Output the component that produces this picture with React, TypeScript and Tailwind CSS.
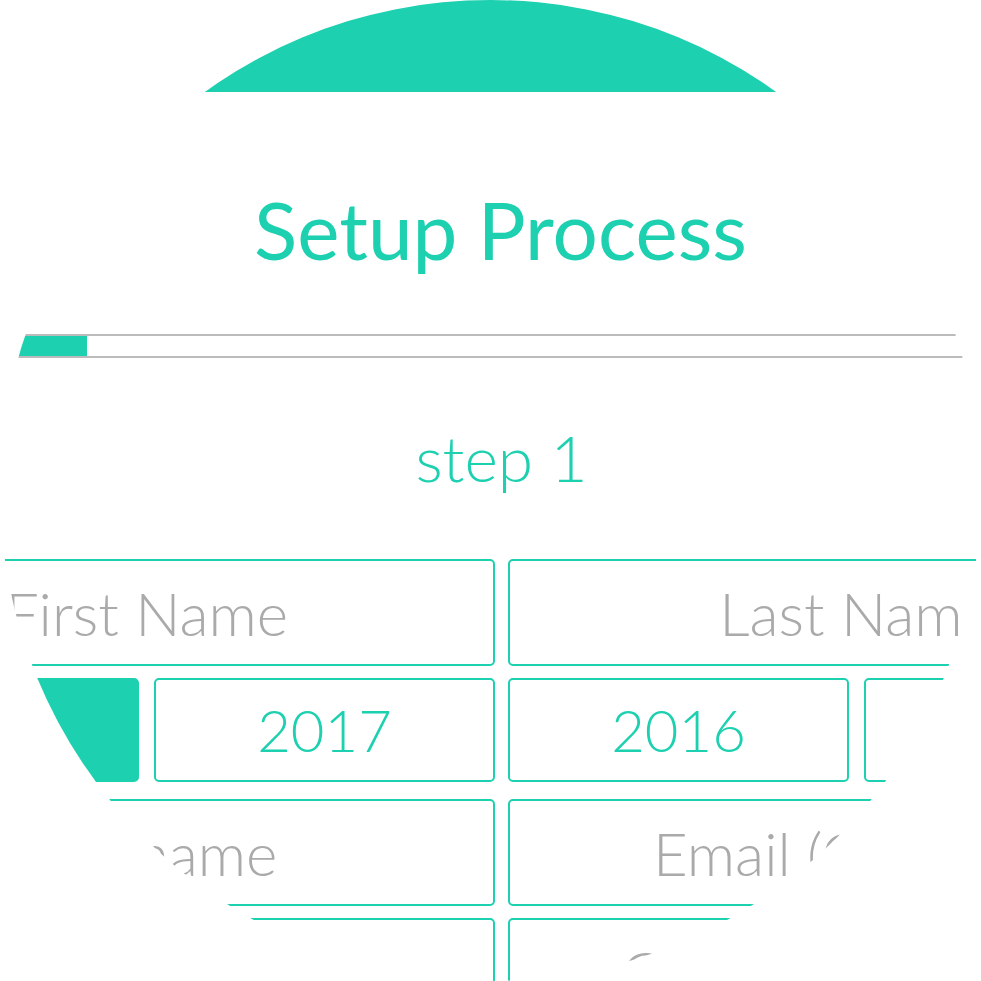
import React from "react";

const Field = ({ label, filled, className = "" }: { label?: string; filled?: boolean; className?: string }) => (
  <div
    className={`border-2 border-[#1dd0b0] rounded-[5px] flex items-center justify-center whitespace-nowrap overflow-hidden ${
      filled ? "bg-[#1dd0b0]" : ""
    } ${className}`}
  >
    {label}
  </div>
);

const App = () => {
  return (
    <div className="w-[981px] h-[981px] bg-white font-['Lato',sans-serif]">
      <div className="w-[981px] h-[981px] rounded-full overflow-hidden flex flex-col bg-white">
        <div className="h-[92px] shrink-0 bg-[#1dd0b0]"></div>

        <h1 className="mt-[97px] pl-[20px] text-center text-[80px] leading-none font-normal text-[#1dd0b0]">
          Setup Process
        </h1>

        <div className="mt-[65px] h-[24px] shrink-0 border-y-2 border-[#bbbbbb]">
          <div className="h-full w-[87px] bg-[#1dd0b0]"></div>
        </div>

        <p className="mt-[68px] pl-[22px] text-center text-[64px] leading-none font-light text-[#1dd0b0]">
          step 1
        </p>

        <div className="mt-[69px] w-[1407px] ml-[-202px] shrink-0 flex flex-col text-[60px] leading-none font-light text-[#aaaaaa]">
          <div className="grid grid-cols-2 gap-[13px]">
            <Field label="First Name" className="h-[107px]" />
            <Field label="Last Name" className="h-[107px]" />
          </div>

          <div className="mt-[12px] grid grid-cols-2 gap-[13px] text-[#1dd0b0] text-[58px]">
            <div className="grid grid-cols-2 gap-[15px]">
              <Field filled className="h-[104px]" />
              <Field label="2017" className="h-[104px]" />
            </div>
            <div className="grid grid-cols-2 gap-[15px]">
              <Field label="2016" className="h-[104px]" />
              <Field className="h-[104px]" />
            </div>
          </div>

          <div className="mt-[17px] grid grid-cols-2 gap-[13px]">
            <Field label="Username" className="h-[107px]" />
            <Field label="Email (Optional)" className="h-[107px]" />
          </div>

          <div className="mt-[12px] grid grid-cols-2 gap-[13px]">
            <Field label="Password" className="h-[107px]" />
            <Field label="Confirm Password" className="h-[107px]" />
          </div>
        </div>
      </div>
    </div>
  );
};

export default App;
